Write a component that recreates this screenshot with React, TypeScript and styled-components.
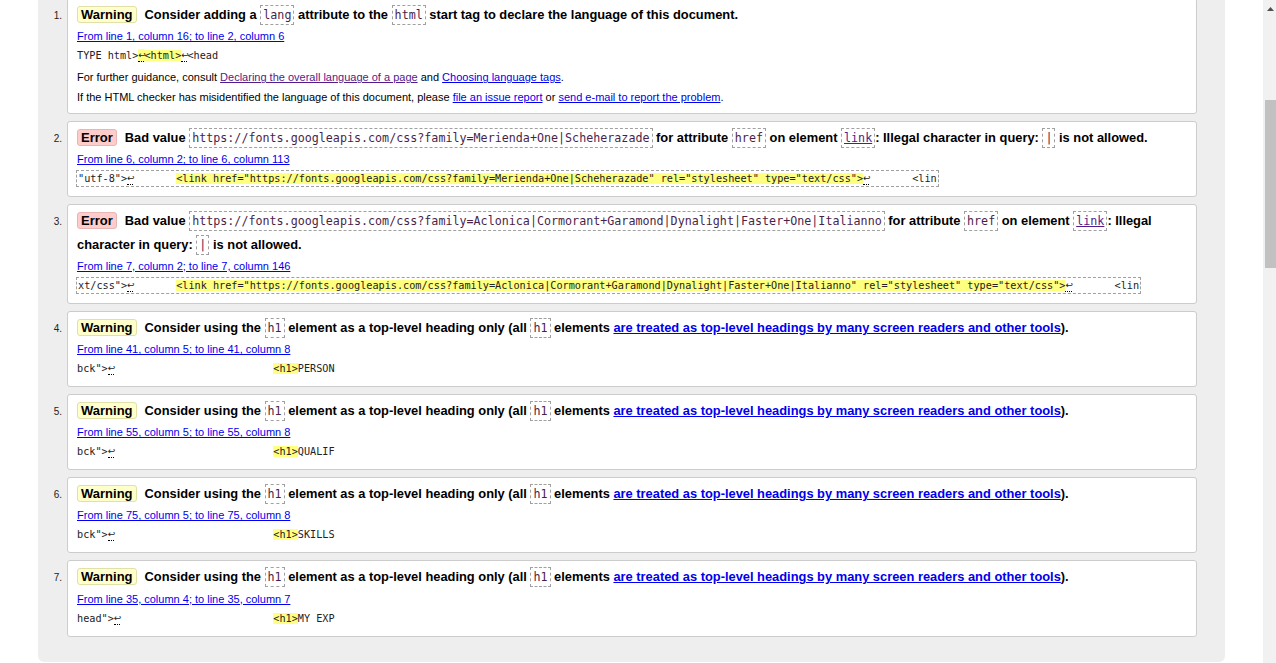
import React from 'react';
import styled, { createGlobalStyle } from 'styled-components';

const Global = createGlobalStyle`
  html, body { margin: 0; padding: 0; background: #fff; }
  body { font-family: 'Liberation Sans', Arial, sans-serif; color: #000; overflow: hidden; }
`;

const Screen = styled.div`
  display: flex;
  height: 663px;
  overflow: hidden;
`;

const Main = styled.main`
  flex: 1;
  min-width: 0;
  padding: 0 38px;
`;

const Panel = styled.section`
  background: #eeeeee;
  border-radius: 0 0 6px 6px;
  padding: 0 28px 25px 0;
  overflow: hidden;
`;

const List = styled.ol`
  list-style: none;
  margin: -2px 0 0;
  padding: 0;
  display: flex;
  flex-direction: column;
  gap: 7px;
`;

const Item = styled.li`
  display: flex;
  align-items: baseline;
`;

const Num = styled.span`
  flex: 0 0 29px;
  box-sizing: border-box;
  padding-right: 5px;
  text-align: right;
  font-size: 10px;
  color: #222;
`;

const Card = styled.div`
  flex: 1;
  min-width: 0;
  background: #fff;
  border: 1px solid #cccccc;
  border-radius: 3px;
  padding: 4px 9px 9px;
`;

const Message = styled.p`
  margin: 0;
  font-size: 12.87px;
  font-weight: bold;
  line-height: 23.2px;
`;

const Badge = styled.span<{ $kind: 'warning' | 'error' }>`
  display: inline-block;
  padding: 0 3px;
  margin-right: 8px;
  font-size: 13px;
  line-height: 15px;
  border-radius: 3px;
  border: 1px solid ${(p) => (p.$kind === 'error' ? '#e8b4b4' : '#e0e0a8')};
  background: ${(p) => (p.$kind === 'error' ? '#ffcccc' : '#ffffcc')};
`;

const Code = styled.code`
  font-family: 'DejaVu Sans Mono', monospace;
  font-size: 11.7px;
  font-weight: normal;
  line-height: 1;
  color: #4a1f4a;
  padding: 2px 2px;
  border: 1px dashed #a0a0a0;
`;

const Link = styled.a<{ $visited?: boolean }>`
  color: ${(p) => (p.$visited ? '#551a8b' : '#0000ee')};
  text-decoration: underline;
`;

const Location = styled.p`
  margin: 3px 0 0;
  font-size: 11px;
  line-height: 14px;
`;

const Extract = styled.p<{ $boxed?: boolean }>`
  margin: 4px 0 0 -1px;
  width: fit-content;
  padding: 1px ${(p) => (p.$boxed ? 1 : 0)}px;
  border: 1px dashed ${(p) => (p.$boxed ? '#a0a0a0' : 'transparent')};
  font-family: 'DejaVu Sans Mono', monospace;
  font-size: 10.2px;
  line-height: 13px;
  white-space: pre;
  color: #222;
`;

const Mark = styled.span`
  background: #ffff80;
`;

const Nl = styled.span`
  display: inline-block;
  width: 6.14px;
  height: 13px;
  vertical-align: top;
  overflow: visible;
  text-align: center;
  font-family: 'DejaVu Sans', sans-serif;
  font-size: 9px;
  line-height: 12px;
  box-sizing: border-box;
  background: inherit;
  border-bottom: 1px dotted #000;
`;

const Note = styled.p`
  margin: 6px 0 0;
  font-size: 11px;
  line-height: 14px;
`;

const Scrollbar = styled.aside`
  flex: 0 0 13px;
  box-sizing: border-box;
  padding-left: 2px;
  background: #f1f1f1;
  display: flex;
  flex-direction: column;
  align-items: stretch;
`;

const Arrow = styled.div`
  height: 17px;
  display: flex;
  align-items: center;
  justify-content: center;
`;

const Thumb = styled.div`
  margin-top: 83px;
  height: 168px;
  background: #c1c1c1;
`;

const NL = () => <Nl>↩</Nl>;

const Loc = ({ children }: { children: React.ReactNode }) => (
  <Location>
    <Link href="#">{children}</Link>
  </Location>
);

const H1Item = ({ n, loc, pre, word }: { n: number; loc: string; pre: string; word: string }) => (
  <Item>
    <Num>{n}.</Num>
    <Card>
      <Message>
        <Badge $kind="warning">Warning</Badge>Consider using the <Code>h1</Code> element as a top-level
        heading only (all <Code>h1</Code> elements{' '}
        <Link href="#">are treated as top-level headings by many screen readers and other tools</Link>).
      </Message>
      <Loc>{loc}</Loc>
      <Extract>
        {pre}
        <NL />
        {' '.repeat(32 - pre.length - 1)}
        <Mark>{'<h1>'}</Mark>
        {word}
      </Extract>
    </Card>
  </Item>
);

export default function App() {
  return (
    <>
      <Global />
      <Screen>
        <Main>
          <Panel>
            <List>
              <Item>
                <Num>1.</Num>
                <Card>
                  <Message>
                    <Badge $kind="warning">Warning</Badge>Consider adding a <Code>lang</Code> attribute to the{' '}
                    <Code>html</Code> start tag to declare the language of this document.
                  </Message>
                  <Loc>From line 1, column 16; to line 2, column 6</Loc>
                  <Extract>
                    {'TYPE html>'}
                    <Mark>
                      <NL />
                      {'<html>'}
                    </Mark>
                    <NL />
                    {'<head'}
                  </Extract>
                  <Note>
                    For further guidance, consult{' '}
                    <Link href="#" $visited>
                      Declaring the overall language of a page
                    </Link>{' '}
                    and <Link href="#">Choosing language tags</Link>.
                  </Note>
                  <Note>
                    If the HTML checker has misidentified the language of this document, please{' '}
                    <Link href="#">file an issue report</Link> or{' '}
                    <Link href="#">send e-mail to report the problem</Link>.
                  </Note>
                </Card>
              </Item>

              <Item>
                <Num>2.</Num>
                <Card>
                  <Message>
                    <Badge $kind="error">Error</Badge>Bad value{' '}
                    <Code>https://fonts.googleapis.com/css?family=Merienda+One|Scheherazade</Code> for attribute{' '}
                    <Code>href</Code> on element{' '}
                    <Code>
                      <Link href="#" $visited>
                        link
                      </Link>
                    </Code>
                    : Illegal character in query: <Code>|</Code> is not allowed.
                  </Message>
                  <Loc>From line 6, column 2; to line 6, column 113</Loc>
                  <Extract $boxed>
                    {'"utf-8">'}
                    <NL />
                    {'       '}
                    <Mark>
                      {'<link href="https://fonts.googleapis.com/css?family=Merienda+One|Scheherazade" rel="stylesheet" type="text/css">'}
                    </Mark>
                    <NL />
                    {'       <lin'}
                  </Extract>
                </Card>
              </Item>

              <Item>
                <Num>3.</Num>
                <Card>
                  <Message>
                    <Badge $kind="error">Error</Badge>Bad value{' '}
                    <Code>
                      https://fonts.googleapis.com/css?family=Aclonica|Cormorant+Garamond|Dynalight|Faster+One|Italianno
                    </Code>{' '}
                    for attribute <Code>href</Code> on element{' '}
                    <Code>
                      <Link href="#" $visited>
                        link
                      </Link>
                    </Code>
                    : Illegal character in query: <Code>|</Code> is not allowed.
                  </Message>
                  <Loc>From line 7, column 2; to line 7, column 146</Loc>
                  <Extract $boxed>
                    {'xt/css">'}
                    <NL />
                    {'       '}
                    <Mark>
                      {'<link href="https://fonts.googleapis.com/css?family=Aclonica|Cormorant+Garamond|Dynalight|Faster+One|Italianno" rel="stylesheet" type="text/css">'}
                    </Mark>
                    <NL />
                    {'       <lin'}
                  </Extract>
                </Card>
              </Item>

              <H1Item n={4} loc="From line 41, column 5; to line 41, column 8" pre={'bck">'} word="PERSON" />
              <H1Item n={5} loc="From line 55, column 5; to line 55, column 8" pre={'bck">'} word="QUALIF" />
              <H1Item n={6} loc="From line 75, column 5; to line 75, column 8" pre={'bck">'} word="SKILLS" />
              <H1Item n={7} loc="From line 35, column 4; to line 35, column 7" pre={'head">'} word="MY EXP" />
            </List>
          </Panel>
        </Main>
        <Scrollbar aria-hidden>
          <Arrow>
            <svg width="7" height="4" viewBox="0 0 7 4">
              <path d="M0 4 L3.5 0 L7 4 Z" fill="#505050" />
            </svg>
          </Arrow>
          <Thumb />
        </Scrollbar>
      </Screen>
    </>
  );
}
